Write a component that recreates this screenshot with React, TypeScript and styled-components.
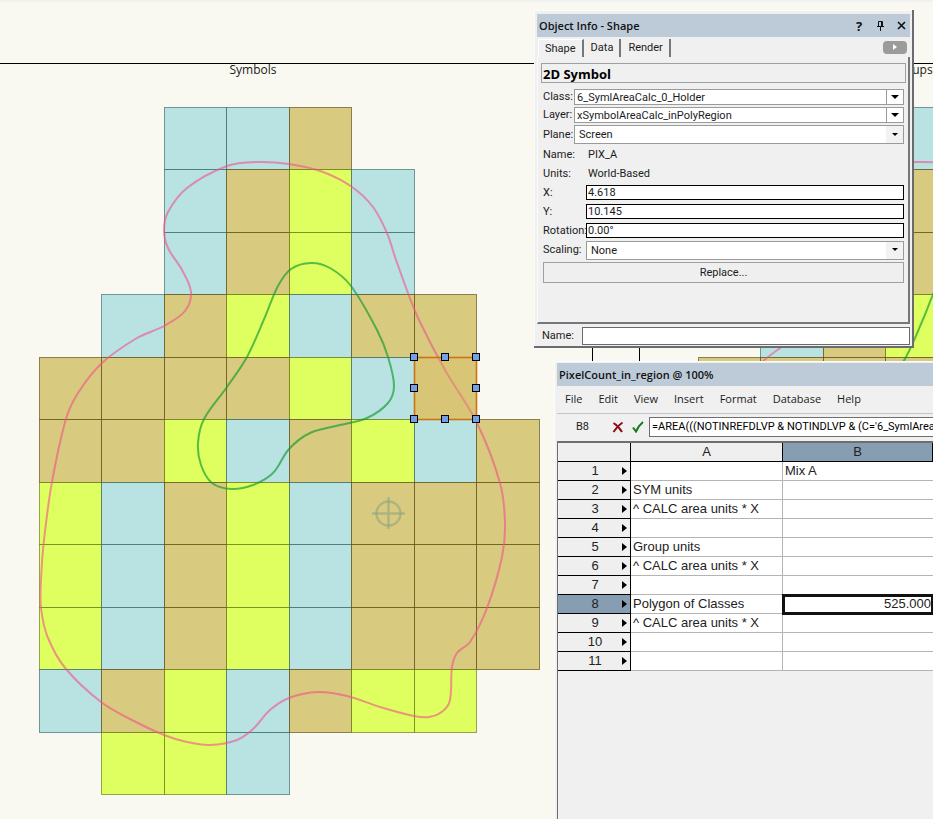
import React from "react";
import styled, { createGlobalStyle, css } from "styled-components";

const GlobalStyle = createGlobalStyle`
  *, *::before, *::after { box-sizing: border-box; }
  body { margin: 0; }
  button, input, select { font: inherit; color: inherit; margin: 0; }
`;

const uiFont = `"Roboto", "Liberation Sans", sans-serif`;
const titleFont = `"Open Sans", "Noto Sans", sans-serif`;
const sheetFont = `"Liberation Sans", Arial, sans-serif`;

/* ---------- drawing canvas ---------- */

const Desktop = styled.main`
  position: relative;
  height: 100vh;
  overflow: hidden;
  background: #faf9f1;
  border-top: 2px solid #f0f0ee;
  color: #1c1c1c;
`;

const Canvas = styled.svg`
  position: absolute;
  inset: -2px 0 0 0;
  width: 100%;
  height: 100vh;
  display: block;
`;

const CanvasLabel = styled.text`
  font-family: ${titleFont};
  font-size: 12px;
  fill: #1a1a1a;
`;

type Swatch = "b" | "t" | "l";
const fills: Record<Swatch, string> = { b: "#b9e3e2", t: "#d8ca7e", l: "#dfff61" };
const strokes: Record<Swatch, string> = {
  b: "rgba(20,80,80,.55)",
  t: "rgba(80,60,0,.6)",
  l: "rgba(90,105,0,.6)",
};

const columns = [39, 101, 164, 226, 289, 351, 414, 476, 539];
const lines = [107, 169, 232, 294, 357, 419, 482, 544, 607, 669, 732, 794];
const pixels = [
  "..bbt...",
  "..btlb..",
  "..btlb..",
  ".btlbtt.",
  "ttttlbt.",
  "ttlbtlbt",
  "lbtlbttt",
  "lbtlbttt",
  "lbtlbttt",
  "btlbtll.",
  ".llb....",
];

type Point = [number, number];

const outerRegion: Point[] = [
  [258, 162], [227, 166], [187, 188], [168, 212], [164, 230], [168, 248], [182, 270], [191, 292],
  [185, 311], [164, 326], [137, 338], [102, 363], [78, 393], [66, 419], [52, 482], [44, 540],
  [41, 580], [41, 608], [48, 638], [66, 669], [101, 702], [130, 719], [164, 735], [187, 742],
  [210, 745], [237, 740], [253, 729], [270, 710], [289, 698], [318, 692], [347, 696], [380, 707],
  [414, 716], [429, 717], [443, 711], [450, 700], [452, 667], [457, 653], [470, 642], [487, 608],
  [502, 557], [505, 523], [500, 483], [477, 423], [445, 370], [419, 320], [408, 293], [395, 257],
  [387, 233], [373, 207], [352, 187], [323, 172], [289, 164],
];

const innerRegion: Point[] = [
  [311, 263], [330, 268], [351, 286], [377, 330], [388, 357], [394, 386], [388, 403], [367, 418],
  [340, 425], [310, 433], [289, 449], [273, 473], [253, 485], [231, 489], [212, 483], [201, 465],
  [198, 443], [204, 419], [227, 387], [247, 357], [265, 317], [278, 286], [291, 269],
];

const smooth = (points: Point[]) => {
  const at = (i: number) => points[(i + points.length) % points.length];
  const chord = (a: Point, b: Point) => Math.hypot(b[0] - a[0], b[1] - a[1]);
  const tangent = (i: number): Point => {
    const before = at(i - 1);
    const next = at(i + 1);
    const span = chord(before, at(i)) + chord(at(i), next);
    return [(next[0] - before[0]) / span, (next[1] - before[1]) / span];
  };
  const parts = points.map((p, i) => {
    const next = at(i + 1);
    const reach = chord(p, next) / 3;
    const out = tangent(i);
    const into = tangent(i + 1);
    return `C${p[0] + out[0] * reach},${p[1] + out[1] * reach} ${next[0] - into[0] * reach},${next[1] - into[1] * reach} ${next[0]},${next[1]}`;
  });
  return `M${points[0].join(",")}${parts.join("")}Z`;
};

const PixelShape = ({ offset }: { offset: number }) => (
  <g transform={`translate(${offset} 0)`}>
    {pixels.flatMap((row, r) =>
      [...row].map((code, c) =>
        code === "." ? null : (
          <rect
            key={`${r}-${c}`}
            x={columns[c] + 0.5}
            y={lines[r] + 0.5}
            width={columns[c + 1] - columns[c]}
            height={lines[r + 1] - lines[r]}
            fill={fills[code as Swatch]}
            stroke={strokes[code as Swatch]}
          />
        )
      )
    )}
    <path d={smooth(outerRegion)} fill="none" stroke="#f0508c" strokeOpacity=".6" strokeWidth="2" />
    <path d={smooth(innerRegion)} fill="none" stroke="#109a2c" strokeOpacity=".65" strokeWidth="2" />
  </g>
);

const handles: Point[] = [
  [414, 357], [445, 357], [476, 357], [414, 388], [476, 388], [414, 419], [445, 419], [476, 419],
];

const Drawing = () => (
  <Canvas aria-label="Symbol drawing">
    <g stroke="#000" shapeRendering="crispEdges">
      <line x1="0" y1="63.5" x2="592" y2="63.5" />
      <line x1="592.5" y1="63" x2="592.5" y2="819" />
      <line x1="639.5" y1="63" x2="639.5" y2="819" />
      <line x1="639" y1="63.5" x2="100%" y2="63.5" />
    </g>
    <CanvasLabel x="253" y="74" textAnchor="middle">Symbols</CanvasLabel>
    <CanvasLabel x="912" y="74" textAnchor="middle">Groups</CanvasLabel>
    <PixelShape offset={0} />
    <PixelShape offset={659} />
    <g fill="none" stroke="#8ba380" strokeOpacity=".55" strokeWidth="2.4">
      <circle cx="388.5" cy="513.5" r="12" />
      <path d="M372 513.5H405M388.5 497V529" />
    </g>
    <rect x="414.5" y="357.5" width="62" height="62" fill="#d8b860" fillOpacity=".3" stroke="#cc7414" strokeWidth="1.6" />
    {handles.map(([x, y]) => (
      <rect key={`${x}-${y}`} x={x - 3.5} y={y - 3.5} width="7" height="7" fill="#74a0e6" stroke="#000" />
    ))}
  </Canvas>
);

/* ---------- shared window parts ---------- */

const TitleBar = styled.header`
  display: flex;
  align-items: center;
  height: 23px;
  padding: 0 2px;
  background: #bdcbd9;
  font: 600 11px/22px ${titleFont};
  color: #111;
`;

const Title = styled.h2`
  flex: 1;
  margin: 0;
  font: inherit;
`;

const BarButtons = styled.div`
  display: flex;
  gap: 7px;
`;

const IconButton = styled.button`
  display: flex;
  align-items: center;
  justify-content: center;
  width: 14px;
  height: 16px;
  padding: 0;
  border: 0;
  background: none;
  font-size: 13px;
  font-weight: 700;
  line-height: 16px;
`;

/* ---------- object info palette ---------- */

const InfoWindow = styled.section`
  position: absolute;
  top: 8px;
  left: 534px;
  width: 380px;
  padding: 4px 2px 0 3px;
  background: #f0f0f0;
  border: solid #6b6b6e;
  border-width: 0 2px 2px 0;
  box-shadow: inset 1px 1px #fbfbfb;
  font: 11px/14px ${uiFont};
`;

const TabBar = styled.div`
  display: flex;
  align-items: center;
  height: 20px;
  padding: 2px 3px 0 1px;
`;

const Tab = styled.button<{ $active?: boolean }>`
  height: 18px;
  padding: 0 6px 0 7px;
  border: 0;
  border-right: 2px solid #77777a;
  background: none;
  ${(p) =>
    p.$active &&
    css`
      padding-left: 6px;
      border-left: 1px solid #fff;
      border-top: 1px solid #fff;
    `}
`;

const TabSpacer = styled.div`
  flex: 1;
`;

const ExpandButton = styled.button`
  display: flex;
  align-items: center;
  justify-content: center;
  width: 24px;
  height: 13px;
  margin-bottom: 2px;
  padding: 0;
  border: 0;
  border-radius: 4px;
  background: #9b9b9b;
`;

const Panel = styled.div`
  display: flex;
  flex-direction: column;
  padding: 6px 2px 39px 3px;
  border: solid #77777a;
  border-width: 0 2px 2px 0;
  border-left: 1px solid #fafafa;
`;

const ObjectType = styled.h3`
  height: 20px;
  margin: 0 0 5px;
  padding: 0 1px;
  border: 1px solid #a0a0a0;
  font: 700 13px/20px ${titleFont};
  color: #000;
`;

const Fields = styled.form`
  display: flex;
  flex-direction: column;
  padding: 0 2px;
`;

const Row = styled.div<{ $height: number }>`
  display: flex;
  align-items: center;
  height: ${(p) => p.$height}px;
`;

const Label = styled.label<{ $width: number }>`
  flex: none;
  width: ${(p) => p.$width}px;
  white-space: nowrap;
`;

const Value = styled.output`
  padding-left: 2px;
`;

const NumberBox = styled.input`
  flex: 1;
  min-width: 0;
  height: 15px;
  padding: 0 1px;
  border: 1px solid #000;
  border-radius: 0;
  background: #fff;
`;

const NameBox = styled(NumberBox)`
  height: 18px;
  border-color: #6a6a6a;
`;

const SelectBox = styled.div<{ $split?: boolean }>`
  flex: 1;
  display: grid;
  grid-template-columns: 1fr 17px;
  height: ${(p) => (p.$split ? 16 : 19)}px;
  border: 1px solid #9a9a9a;
  background: #fff;

  select {
    grid-area: 1 / 1 / 2 / 3;
    appearance: none;
    min-width: 0;
    padding: 0 ${(p) => (p.$split ? 2 : 4)}px;
    border: 0;
    background: none;
    line-height: 13px;
  }
`;

const ArrowCell = styled.span<{ $split?: boolean }>`
  grid-area: 1 / 2 / 2 / 3;
  display: flex;
  align-items: center;
  justify-content: center;
  pointer-events: none;
  ${(p) =>
    p.$split
      ? css`
          border-left: 1px solid #9a9a9a;
        `
      : css`
          background: #f2f2f2;
        `}
`;

const ReplaceButton = styled.button`
  height: 21px;
  margin-top: 2px;
  padding: 0;
  border: 1px solid #a0a0a0;
  background: #efefef;
`;

const NameRow = styled.div`
  display: flex;
  align-items: center;
  padding: 3px 0 1px 5px;
`;

type SelectFieldProps = { id: string; label: string; value: string; labelWidth: number; height: number; split?: boolean };

const SelectField = ({ id, label, value, labelWidth, height, split }: SelectFieldProps) => (
  <Row $height={height}>
    <Label htmlFor={id} $width={labelWidth}>{label}</Label>
    <SelectBox $split={split}>
      <select id={id} defaultValue={value}>
        <option>{value}</option>
      </select>
      <ArrowCell $split={split}>
        <svg width="8" height="4" viewBox="0 0 8 4" aria-hidden="true">
          <path d={split ? "M0 0H8L4 4Z" : "M1 0H7L4 3Z"} fill="#000" />
        </svg>
      </ArrowCell>
    </SelectBox>
  </Row>
);

const numbers = [
  { id: "pos-x", label: "X:", value: "4.618" },
  { id: "pos-y", label: "Y:", value: "10.145" },
  { id: "rotation", label: "Rotation:", value: "0.00°" },
];

const ObjectInfo = () => (
  <InfoWindow>
    <TitleBar>
      <Title>Object Info - Shape</Title>
      <BarButtons>
        <IconButton aria-label="Help">?</IconButton>
        <IconButton aria-label="Pin">
          <svg width="9" height="10" viewBox="0 0 9 10" fill="none" stroke="#111">
            <path d="M2.5 .5H6.5V5.5M2.5 .5V5.5M1 5.5H8M4.5 5.5V10" />
            <path d="M6 1V5" strokeWidth="2" />
          </svg>
        </IconButton>
        <IconButton aria-label="Close">
          <svg width="9" height="9" viewBox="0 0 9 9" stroke="#111" strokeWidth="1.6">
            <path d="M1 1L8 8M8 1L1 8" />
          </svg>
        </IconButton>
      </BarButtons>
    </TitleBar>
    <TabBar role="tablist">
      <Tab role="tab" aria-selected $active>Shape</Tab>
      <Tab role="tab">Data</Tab>
      <Tab role="tab">Render</Tab>
      <TabSpacer />
      <ExpandButton aria-label="More">
        <svg width="4" height="6" viewBox="0 0 4 6"><path d="M0 0L4 3L0 6Z" fill="#fff" /></svg>
      </ExpandButton>
    </TabBar>
    <Panel>
      <ObjectType>2D Symbol</ObjectType>
      <Fields>
        <SelectField id="class" label="Class:" value="6_SymlAreaCalc_0_Holder" labelWidth={31} height={18} split />
        <SelectField id="layer" label="Layer:" value="xSymbolAreaCalc_inPolyRegion" labelWidth={31} height={18} split />
        <SelectField id="plane" label="Plane:" value="Screen" labelWidth={31} height={21} />
        <Row $height={19}>
          <Label $width={43} htmlFor="symbol">Name:</Label>
          <Value id="symbol">PIX_A</Value>
        </Row>
        <Row $height={19}>
          <Label $width={43} htmlFor="units">Units:</Label>
          <Value id="units">World-Based</Value>
        </Row>
        {numbers.map((n) => (
          <Row key={n.id} $height={19}>
            <Label $width={43} htmlFor={n.id}>{n.label}</Label>
            <NumberBox id={n.id} defaultValue={n.value} />
          </Row>
        ))}
        <SelectField id="scaling" label="Scaling:" value="None" labelWidth={43} height={20} />
        <ReplaceButton type="button">Replace...</ReplaceButton>
      </Fields>
    </Panel>
    <NameRow>
      <Label $width={40} htmlFor="object-name">Name:</Label>
      <NameBox id="object-name" />
    </NameRow>
  </InfoWindow>
);

/* ---------- worksheet window ---------- */

const SheetWindow = styled.section`
  position: absolute;
  top: 359px;
  left: 554px;
  right: 0;
  bottom: 0;
  display: flex;
  flex-direction: column;
  padding: 2px 0 0 3px;
  background: #f0f0f0;
  box-shadow: inset 1px 1px #fcfcfc;
`;

const MenuBar = styled.nav`
  display: flex;
  align-items: center;
  gap: 16px;
  height: 27px;
  padding: 0 8px 2px;
  font: 11px/24px ${titleFont};
`;

const MenuItem = styled.button`
  padding: 0;
  border: 0;
  background: none;
`;

const FormulaBar = styled.div`
  display: flex;
  align-items: center;
  height: 28px;
  border-top: 1px solid #c4c4c4;
  padding-bottom: 2px;
  font: 11px/16px ${uiFont};
`;

const CellName = styled.output`
  width: 51px;
  text-align: center;
`;

const FormulaButton = styled(IconButton)`
  width: 20px;
`;

const Formula = styled.input`
  flex: 1;
  min-width: 0;
  height: 20px;
  margin-left: 1px;
  padding: 0 0 0 2px;
  border: 1px solid #6f6f6f;
  border-right: 0;
  background: #fff;
  color: #000;
`;

const Grid = styled.div`
  flex: 1;
  border: solid #6e6e6e;
  border-width: 2px 0 0 1px;
`;

const Table = styled.table`
  width: 100%;
  table-layout: fixed;
  border-spacing: 0;
  font: 13px/18px ${sheetFont};
  color: #222;
`;

const HeadCell = styled.th<{ $selected?: boolean; $width?: number }>`
  width: ${(p) => (p.$width ? `${p.$width}px` : "auto")};
  height: 19px;
  padding: 0;
  border: solid #000;
  border-width: 0 1px 1px 0;
  background: ${(p) => (p.$selected ? "#869db2" : "#efefef")};
  font-weight: 400;
  text-align: center;
`;

const RowHead = styled(HeadCell)`
  & > div {
    display: grid;
    grid-template-columns: 1fr 5px;
    align-items: center;
    padding: 0 3px 0 10px;
  }
`;

const Cell = styled.td<{ $selected?: boolean }>`
  height: 19px;
  padding: 0 2px;
  border: solid #b4b4b4;
  border-width: 0 1px 1px 0;
  background: #fff;
  white-space: nowrap;
  &:last-child { border-right: 0; }
  ${(p) =>
    p.$selected &&
    css`
      outline: 3px solid #111;
      outline-offset: -2px;
      text-align: right;
    `}
`;

const calc = "^ CALC area units * X";
const sheetRows = [
  ["", "Mix A"],
  ["SYM units", ""],
  [calc, ""],
  ["", ""],
  ["Group units", ""],
  [calc, ""],
  ["", ""],
  ["Polygon of Classes", "525.000"],
  [calc, ""],
  ["", ""],
  ["", ""],
];
const selectedRow = 7;

const Worksheet = () => (
  <SheetWindow>
    <TitleBar>
      <Title>PixelCount_in_region @ 100%</Title>
    </TitleBar>
    <MenuBar>
      {["File", "Edit", "View", "Insert", "Format", "Database", "Help"].map((name) => (
        <MenuItem key={name}>{name}</MenuItem>
      ))}
    </MenuBar>
    <FormulaBar>
      <CellName>B8</CellName>
      <FormulaButton aria-label="Cancel">
        <svg width="12" height="12" viewBox="0 0 12 12" stroke="#8d1018" strokeWidth="2" fill="none">
          <path d="M1.500 2C4 3.500 8 7.500 10 11M10.500 1.500C7.500 3.500 3.500 7.500 1.500 11" />
        </svg>
      </FormulaButton>
      <FormulaButton aria-label="Accept">
        <svg width="12" height="12" viewBox="0 0 12 12" stroke="#157a1c" strokeWidth="2" fill="none">
          <path d="M1 6.500L4 10.500C5.500 7 8 3.500 11 1" />
        </svg>
      </FormulaButton>
      <Formula
        aria-label="Formula"
        defaultValue="=AREA(((NOTINREFDLVP & NOTINDLVP & (C='6_SymlAreaCalc_0_Holder')))"
      />
    </FormulaBar>
    <Grid>
      <Table>
        <thead>
          <tr>
            <HeadCell $width={73} />
            <HeadCell $width={152}>A</HeadCell>
            <HeadCell $selected>B</HeadCell>
          </tr>
        </thead>
        <tbody>
          {sheetRows.map(([a, b], i) => (
            <tr key={i}>
              <RowHead scope="row" $selected={i === selectedRow}>
                <div>
                  {i + 1}
                  <svg width="5" height="8" viewBox="0 0 5 8" aria-hidden="true">
                    <path d="M0 0L5 4L0 8Z" fill="#000" />
                  </svg>
                </div>
              </RowHead>
              <Cell>{a}</Cell>
              <Cell $selected={i === selectedRow}>{b}</Cell>
            </tr>
          ))}
        </tbody>
      </Table>
    </Grid>
  </SheetWindow>
);

export default function App() {
  return (
    <>
      <GlobalStyle />
      <Desktop>
        <Drawing />
        <ObjectInfo />
        <Worksheet />
      </Desktop>
    </>
  );
}
